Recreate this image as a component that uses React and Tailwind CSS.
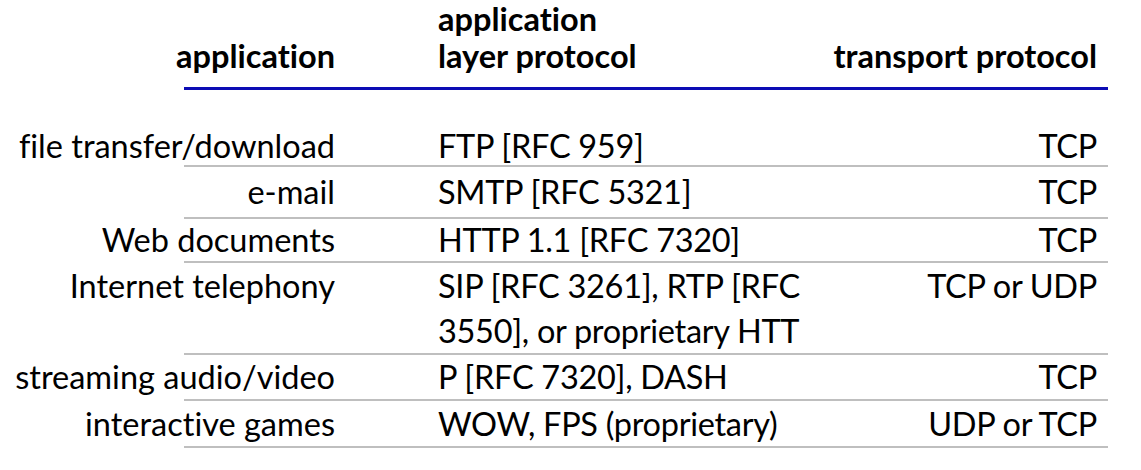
import React from "react";

const rows = [
  { app: "file transfer/download", proto: ["FTP [RFC 959]"], transport: "TCP", h: "h-[40px]", multi: false },
  { app: "e-mail", proto: ["SMTP [RFC 5321]"], transport: "TCP", h: "h-[52px]", multi: false },
  { app: "Web documents", proto: ["HTTP 1.1 [RFC 7320]"], transport: "TCP", h: "h-[44px]", multi: false },
  {
    app: "Internet telephony",
    proto: ["SIP [RFC 3261], RTP [RFC", "3550], or proprietary HTT"],
    transport: "TCP or UDP",
    h: "h-[92px]",
    multi: true,
  },
  { app: "streaming audio/video", proto: ["P [RFC 7320], DASH"], transport: "TCP", h: "h-[46px]", multi: false },
  { app: "interactive games", proto: ["WOW, FPS (proprietary)"], transport: "UDP or TCP", h: "h-[47px]", multi: false },
];

const Row = ({ row }) => {
  const lead = row.multi ? "leading-[45px]" : "leading-[36px]";
  return (
    <div
      className={`flex ${row.multi ? "items-start" : "items-center"} ${row.h} border-b-2 border-[#bfbfbf]`}
    >
      <div className={`w-[151px] flex justify-end whitespace-nowrap ${lead}`}>
        <span>{row.app}</span>
      </div>
      <div className={`ml-[103px] whitespace-nowrap tracking-[-0.3px] ${lead}`}>
        {row.proto.map((line) => (
          <div key={line}>{line}</div>
        ))}
      </div>
      <div className={`flex-1 text-right pr-[11px] whitespace-nowrap tracking-[-0.3px] ${lead}`}>
        {row.transport}
      </div>
    </div>
  );
};

const App = () => {
  return (
    <div className="w-[1141px] h-[470px] bg-white text-black font-[Lato,sans-serif] text-[32.5px] [font-variant-ligatures:none] overflow-hidden">
      <div className="ml-[184px] w-[924px]">
        {/* header */}
        <div className="h-[90px] flex items-end pb-[13px] border-b-[3px] border-[#0c0cb4] font-bold leading-[37px]">
          <div className="w-[151px] flex justify-end whitespace-nowrap">
            <span>application</span>
          </div>
          <div className="ml-[103px] whitespace-nowrap">
            <div>application</div>
            <div>layer protocol</div>
          </div>
          <div className="flex-1 text-right pr-[11px] whitespace-nowrap">transport protocol</div>
        </div>

        <div className="mt-[37px]">
          {rows.map((row) => (
            <Row key={row.app} row={row} />
          ))}
        </div>
      </div>
    </div>
  );
};

export default App;
